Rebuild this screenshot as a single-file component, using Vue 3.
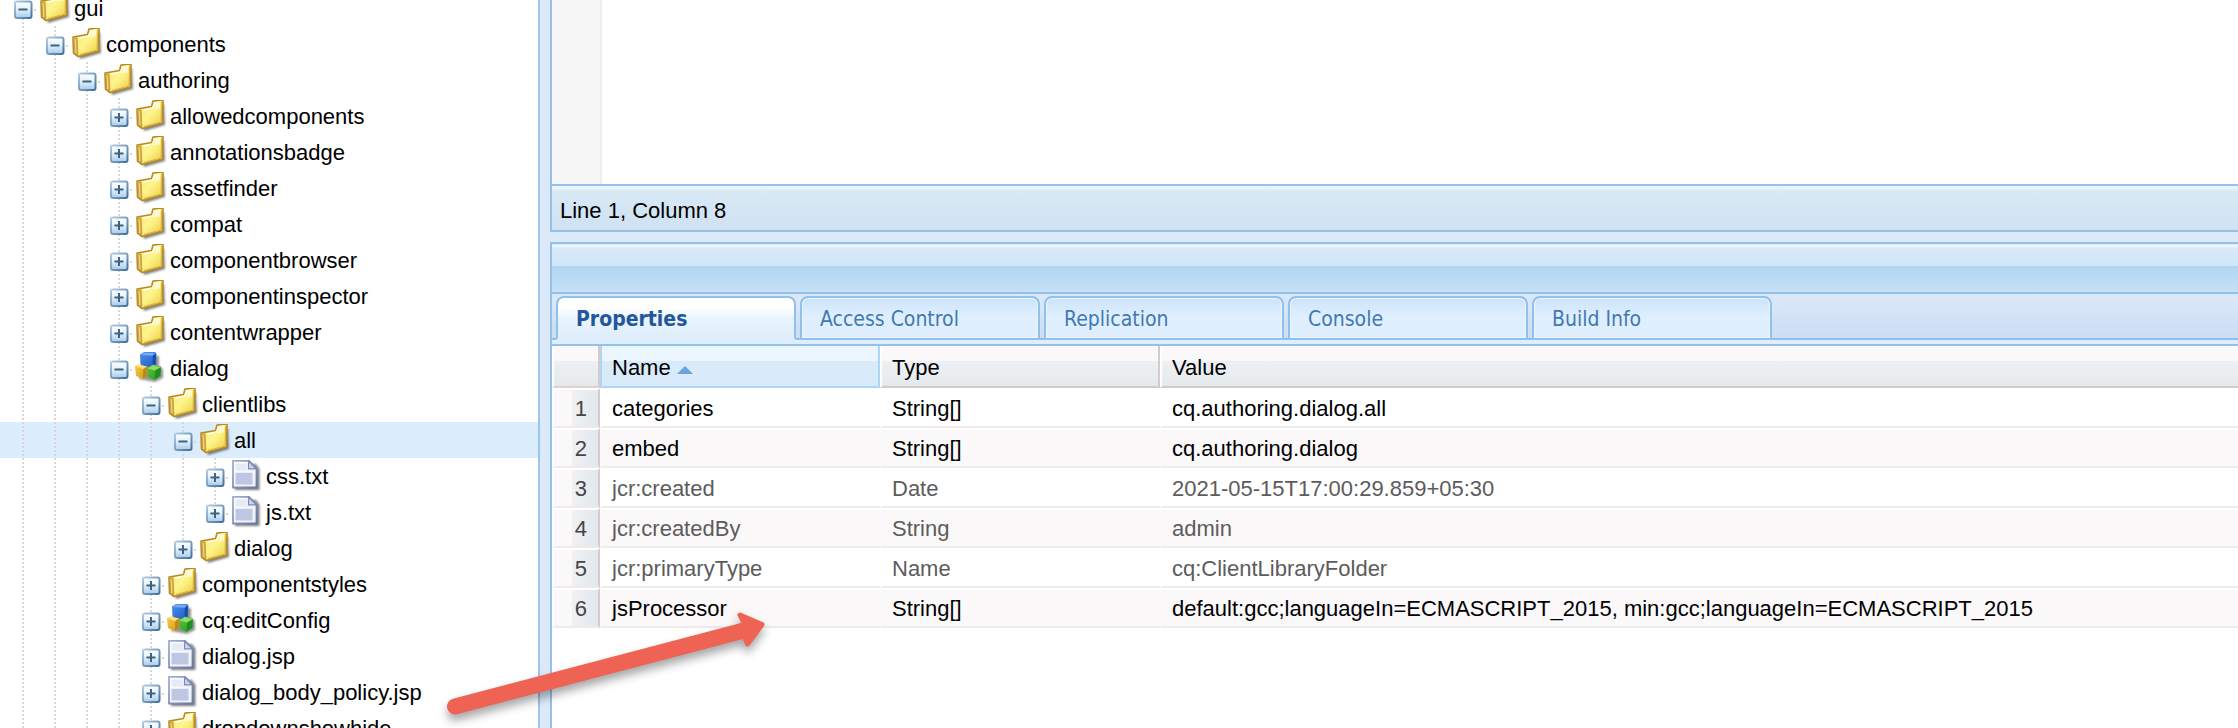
<script setup>
import { ref } from 'vue'

const nodes = [
  { id: 1, level: 0, name: 'gui', icon: 'folder', open: true },
  { id: 2, level: 1, name: 'components', icon: 'folder', open: true },
  { id: 3, level: 2, name: 'authoring', icon: 'folder', open: true },
  { id: 4, level: 3, name: 'allowedcomponents', icon: 'folder' },
  { id: 5, level: 3, name: 'annotationsbadge', icon: 'folder' },
  { id: 6, level: 3, name: 'assetfinder', icon: 'folder' },
  { id: 7, level: 3, name: 'compat', icon: 'folder' },
  { id: 8, level: 3, name: 'componentbrowser', icon: 'folder' },
  { id: 9, level: 3, name: 'componentinspector', icon: 'folder' },
  { id: 10, level: 3, name: 'contentwrapper', icon: 'folder' },
  { id: 11, level: 3, name: 'dialog', icon: 'cubes', open: true },
  { id: 12, level: 4, name: 'clientlibs', icon: 'folder', open: true },
  { id: 13, level: 5, name: 'all', icon: 'folder', open: true },
  { id: 14, level: 6, name: 'css.txt', icon: 'file' },
  { id: 15, level: 6, name: 'js.txt', icon: 'file', last: true },
  { id: 16, level: 5, name: 'dialog', icon: 'folder', last: true },
  { id: 17, level: 4, name: 'componentstyles', icon: 'folder' },
  { id: 18, level: 4, name: 'cq:editConfig', icon: 'cubes' },
  { id: 19, level: 4, name: 'dialog.jsp', icon: 'file' },
  { id: 20, level: 4, name: 'dialog_body_policy.jsp', icon: 'file' },
  { id: 21, level: 4, name: 'dropdownshowhide', icon: 'folder' },
]
const selected = ref(13)

const tabs = ['Properties', 'Access Control', 'Replication', 'Console', 'Build Info']
const activeTab = ref('Properties')

const rows = [
  { name: 'categories', type: 'String[]', value: 'cq.authoring.dialog.all' },
  { name: 'embed', type: 'String[]', value: 'cq.authoring.dialog' },
  { name: 'jcr:created', type: 'Date', value: '2021-05-15T17:00:29.859+05:30', locked: true },
  { name: 'jcr:createdBy', type: 'String', value: 'admin', locked: true },
  { name: 'jcr:primaryType', type: 'Name', value: 'cq:ClientLibraryFolder', locked: true },
  {
    name: 'jsProcessor',
    type: 'String[]',
    value: 'default:gcc;languageIn=ECMASCRIPT_2015, min:gcc;languageIn=ECMASCRIPT_2015',
  },
]
</script>

<template>
  <div class="app">
    <svg class="defs" width="0" height="0" aria-hidden="true">
      <defs>
        <linearGradient id="g-body" x1="0" y1="0" x2="1" y2="1">
          <stop offset="0" stop-color="#f8e083" />
          <stop offset=".5" stop-color="#fdf58c" />
          <stop offset="1" stop-color="#ecc840" />
        </linearGradient>
        <linearGradient id="g-box" x1="0" y1="0" x2="0" y2="1">
          <stop offset="0" stop-color="#ffffff" />
          <stop offset=".45" stop-color="#e4f0fb" />
          <stop offset="1" stop-color="#a9cbea" />
        </linearGradient>
        <linearGradient id="g-edge" x1="0" y1="0" x2="1" y2="1">
          <stop offset="0" stop-color="#b4cce4" />
          <stop offset="1" stop-color="#3f6f9b" />
        </linearGradient>
        <linearGradient id="g-blue" x1="0" y1="0" x2="1" y2="1">
          <stop offset="0" stop-color="#4f8fee" />
          <stop offset="1" stop-color="#1d59c4" />
        </linearGradient>
        <linearGradient id="g-gold" x1="0" y1="0" x2="1" y2="1">
          <stop offset="0" stop-color="#f7cf45" />
          <stop offset="1" stop-color="#d3961a" />
        </linearGradient>
        <linearGradient id="g-green" x1="0" y1="0" x2="1" y2="1">
          <stop offset="0" stop-color="#5cc636" />
          <stop offset="1" stop-color="#279a20" />
        </linearGradient>
        <linearGradient id="g-page" x1="0" y1="0" x2="1" y2="1">
          <stop offset="0" stop-color="#ffffff" />
          <stop offset="1" stop-color="#eceff9" />
        </linearGradient>
        <linearGradient id="g-fileedge" x1="0" y1="0" x2="1" y2="1">
          <stop offset="0" stop-color="#a3afd2" />
          <stop offset="1" stop-color="#6577a4" />
        </linearGradient>
        <filter id="f-soft" x="-30%" y="-30%" width="160%" height="160%">
          <feGaussianBlur stdDeviation="1.3" />
        </filter>
      </defs>
      <symbol id="i-folder" viewBox="0 0 32 32">
        <path d="M5 13 L29 4 L30 25 L9 31Z" fill="#000" opacity=".5" filter="url(#f-soft)" />
        <path d="M2 9 L16.5 6.5 L18 1 L28 0 L27.5 23 L7 28.5 L2.5 25Z" fill="url(#g-body)" stroke="#b58a2a" stroke-width="1.6" stroke-linejoin="round" />
        <path d="M2.5 9.5 L6.5 9.5 L7.5 27.5 L3 24.5Z" fill="#d0a236" />
        <path d="M4.2 11 L5 25" stroke="#f2da84" stroke-width="1.2" />
        <path d="M8 10.2 L17.8 8 L19.5 3 L25.5 2.2" fill="none" stroke="#fffbe0" stroke-width="1.6" />
        <path d="M20 3.5 L25 3 L24.5 8 L19.5 9.5Z" fill="#fffbe8" opacity=".75" />
        <path d="M26.6 2 L26.2 22 L9 26.6" fill="none" stroke="#dcb23c" stroke-width="1.2" />
      </symbol>
      <symbol id="i-cubes" viewBox="0 0 32 32">
        <path d="M8 4 H24 V14 L28 17 V26 L20 30 L4 27Z" fill="#000" opacity=".42" filter="url(#f-soft)" />
        <path d="M5 2.5 L9 0 H20 L21.5 1.5 L21 12.5 L17 15 L7.5 14 L5.5 12Z" fill="url(#g-blue)" />
        <path d="M6 3 L9 .8 H20 L17.5 3.8Z" fill="#76aaf2" />
        <path d="M17.8 4 L21 2 L20.5 12 L17.5 14Z" fill="#174cae" />
        <path d="M0 14 L4 12.5 L12 14.5 L11.5 24.5 L8 27 L1 24Z" fill="url(#g-gold)" />
        <path d="M.5 14.2 L4 12.8 L11.5 14.6 L8 17Z" fill="#fbe07c" />
        <path d="M8.2 17.2 L11.8 15 L11.3 24.3 L8 26.6Z" fill="#bf8414" />
        <path d="M12 16.5 L18 12.5 L26 15 L25.5 24 L19.5 28 L12.5 24.5Z" fill="url(#g-green)" />
        <path d="M12.5 16.5 L18 13 L25.5 15.2 L19.8 18.6Z" fill="#8fdd68" />
        <path d="M20 18.8 L25.8 15.6 L25.2 23.8 L19.6 27.5Z" fill="#238c24" />
      </symbol>
      <symbol id="i-file" viewBox="0 0 32 32">
        <path d="M4 4 H25 L28.5 9 V30 H4Z" fill="#000" opacity=".5" filter="url(#f-soft)" />
        <path d="M2 .8 H18 L25.5 8.5 V27.5 H2Z" fill="url(#g-page)" stroke="url(#g-fileedge)" stroke-width="1.8" />
        <path d="M4.5 3.5 H15.5 V9.5 H21.5 V10.5 H4.5Z" fill="#e6e9f6" />
        <rect x="4.5" y="12.8" width="17" height="11.7" fill="#bfc6e3" />
        <path d="M17.5 1 V8.8 H25.2Z" fill="#cdd4eb" stroke="#7c8ab6" stroke-width="1.2" />
      </symbol>
    </svg>

    <nav class="tree" aria-label="Repository">
      <ul role="tree">
        <li
          v-for="node in nodes"
          :key="node.id"
          role="treeitem"
          :aria-selected="node.id === selected"
          :class="{ selected: node.id === selected }"
        >
          <span v-for="n in node.level" :key="n" class="guide"></span>
          <button type="button" class="guide toggle" :class="{ last: node.last }" :aria-label="(node.open ? 'Collapse ' : 'Expand ') + node.name">
            <svg viewBox="0 0 32 32" width="32" height="32" aria-hidden="true">
              <rect x="8" y="9.5" width="16.5" height="16.5" rx="2" fill="url(#g-box)" stroke="url(#g-edge)" stroke-width="2" />
              <path d="M11.5 17.5 H20.5" stroke="#3c6480" stroke-width="2" />
              <path v-if="!node.open" d="M16 13 V22" stroke="#3c6480" stroke-width="2" />
              <rect x="27" y="17" width="2" height="2" fill="#ddd6d8" />
            </svg>
          </button>
          <svg class="icon" width="32" height="32" aria-hidden="true"><use :href="'#i-' + node.icon" /></svg>
          <a href="#" @click.prevent="selected = node.id">{{ node.name }}</a>
        </li>
      </ul>
    </nav>

    <div class="splitter"></div>

    <main>
      <section class="editor">
        <div class="code">
          <div class="gutter"></div>
          <textarea aria-label="Source" spellcheck="false"></textarea>
        </div>
        <footer>Line 1, Column 8</footer>
      </section>

      <section class="panel">
        <header></header>
        <div class="tabs" role="tablist">
          <button
            v-for="tab in tabs"
            :key="tab"
            type="button"
            role="tab"
            :aria-selected="tab === activeTab"
            :class="{ active: tab === activeTab }"
            @click="activeTab = tab"
          >{{ tab }}</button>
        </div>
        <div class="strip"></div>
        <table>
          <colgroup>
            <col class="c-num" /><col class="c-name" /><col class="c-type" /><col />
          </colgroup>
          <thead>
            <tr>
              <th class="num"></th>
              <th class="sorted" aria-sort="ascending">
                Name
                <svg width="16" height="8" viewBox="0 0 16 8" aria-hidden="true"><path d="M0 8 L8 0 L16 8Z" fill="#69a4db" /></svg>
              </th>
              <th>Type</th>
              <th class="wide">Value</th>
            </tr>
          </thead>
          <tbody>
            <tr v-for="(row, i) in rows" :key="row.name" :class="{ locked: row.locked, alt: i % 2 }">
              <td class="num">{{ i + 1 }}</td>
              <td>{{ row.name }}</td>
              <td>{{ row.type }}</td>
              <td>{{ row.value }}</td>
            </tr>
          </tbody>
        </table>
      </section>
    </main>

    <svg class="pointer" width="360" height="140" viewBox="0 0 360 140" aria-hidden="true">
      <path
        d="M15 106.5 L302 31"
        fill="none" stroke="#ee6354" stroke-width="16" stroke-linecap="round"
      />
      <path
        d="M300 15 L322 24.5 L307.5 44 L303 34 L302 27 L303.5 22Z"
        fill="#ee6354" stroke="#ee6354" stroke-width="5" stroke-linejoin="round"
      />
    </svg>
  </div>
</template>

<style>
body {
  margin: 0;
  background: #fff;
}
</style>

<style scoped>
.app {
  position: relative;
  display: flex;
  height: 100vh;
  overflow: hidden;
  background: #fff;
  color: #000;
  font: 22px/36px "Liberation Sans", Arial, sans-serif;
}
.defs {
  position: absolute;
}
button {
  margin: 0;
  padding: 0;
  border: 0;
  background: none;
  font: inherit;
  cursor: pointer;
}

/* repository tree */
.tree {
  flex: 0 0 538px;
  overflow: hidden;
}
.tree ul {
  margin: -10px 0 0;
  padding: 0;
  list-style: none;
}
.tree li {
  display: flex;
  align-items: center;
  height: 36px;
  padding-left: 7px;
  white-space: nowrap;
}
.tree li.selected {
  background: #dbecfc;
}
.guide {
  flex: 0 0 32px;
  height: 36px;
  background: repeating-linear-gradient(#ddd2d6 0 2px, transparent 2px 4px) 15px 0 / 2px 36px no-repeat;
}
.guide.last {
  background-size: 2px 18px;
}
.toggle svg {
  display: block;
}
.icon {
  flex: 0 0 32px;
  overflow: visible;
}
.tree a {
  padding: 2px 0 0 3px;
  color: #000;
  text-decoration: none;
}

.splitter {
  flex: 0 0 10px;
  border-left: 2px solid #9cc5ec;
  background: #dce9f8;
}

/* right side */
main {
  flex: 1;
  min-width: 0;
  display: flex;
  flex-direction: column;
  gap: 10px;
  background: #dce9f8;
}
.editor {
  border: solid #94c1ea;
  border-width: 0 0 2px 2px;
}
.code {
  display: flex;
  height: 184px;
  background: #fff;
}
.gutter {
  flex: 0 0 48px;
  border-right: 2px solid #eeeeee;
  background: #f7f7f7;
}
.code textarea {
  flex: 1;
  border: 0;
  padding: 0 8px;
  outline: 0;
  resize: none;
  background: #fff;
  font: 22px/30px "Liberation Mono", monospace;
}
footer {
  height: 44px;
  padding-left: 8px;
  border-top: 2px solid #94c1ea;
  background: linear-gradient(#eaf5fc 0 2px, #d9eaf6 5px, #d4e6f4 50%, #d0e2f2);
  line-height: 50px;
}
.panel {
  flex: 1;
  border: solid #94c1ea;
  border-width: 2px 0 0 2px;
  background: #fff;
}
.panel header {
  height: 48px;
  border-bottom: 2px solid #94c1ea;
  background: linear-gradient(#d6e9fa 0 1px, #eef7fe 1px 2px, #d9e9f7 4px, #d4e7f7 14px, #cee5fb 22px, #b1d4f1 22px, #b9dbf3 34px, #c7e0f5);
}
.tabs {
  display: flex;
  gap: 4px;
  padding: 2px 4px 0;
  background: linear-gradient(#dce8f8, #c9ddf4);
  box-shadow: inset 0 -2px #8fbfea;
}
.tabs button {
  box-sizing: border-box;
  width: 240px;
  height: 44px;
  padding: 2px 0 0 18px;
  border: 2px solid #92c0e8;
  border-radius: 8px 8px 0 0;
  background: linear-gradient(#cbe4fb, #dfeffd 18px);
  box-shadow: inset 0 0 0 1px #eaf5fe;
  color: #4179b4;
  font: 21px/38px "DejaVu Sans Condensed", Tahoma, sans-serif;
  text-align: left;
}
.tabs button.active {
  border-bottom-color: #deeefc;
  background: linear-gradient(#ffffff 0 10px, #e9f4fd 20px, #deeefc);
  box-shadow: none;
  color: #23569a;
  font-weight: bold;
}
.strip {
  height: 4px;
  border-bottom: 2px solid #94c1ea;
  background: #deeefc;
}

/* properties grid */
table {
  width: 100%;
  table-layout: fixed;
  border-collapse: separate;
  border-spacing: 0;
  text-align: left;
}
.c-num {
  width: 48px;
}
.c-name,
.c-type {
  width: 280px;
}
th,
td {
  box-sizing: border-box;
  padding: 2px 0 0 10px;
  border-left: 2px solid transparent;
  white-space: nowrap;
  font-weight: normal;
}
th {
  height: 42px;
  padding-top: 4px;
  border-left-color: #fff;
  border-right: 2px solid #d6cbcb;
  border-bottom: 2px solid #d2cccc;
  background: linear-gradient(#faf8f9 0 15px, #eeeff4 15px, #e9edef 30px, #e4e8ea);
  line-height: 36px;
}
th.num {
  border-bottom-color: #ddd2d0;
}
th.wide {
  border-right: 0;
}
th.sorted {
  border-color: #aed6f6;
  background: linear-gradient(#ebf6fe 0 15px, #d9eafb 15px);
}
th svg {
  vertical-align: 1px;
}
td {
  height: 40px;
  border-top: 2px solid #fff;
  border-bottom: 2px solid #f0eaeb;
  background: #fff;
  line-height: 34px;
}
.alt td {
  background: #faf8f9;
}
tr.locked td {
  color: #5c5c5c;
}
td.num,
tr.locked td.num,
.alt td.num {
  padding: 2px 11px 0 0;
  border-left-color: #fff;
  border-right: 2px solid #d6cccd;
  background: linear-gradient(90deg, #faf8f9 0 18px, #eff1f4 18px, #e2e8ec);
  color: #444;
  text-align: right;
}

.pointer {
  position: absolute;
  left: 440px;
  top: 600px;
  filter: drop-shadow(0 6px 5px rgba(0, 0, 0, 0.35));
  pointer-events: none;
}
</style>
